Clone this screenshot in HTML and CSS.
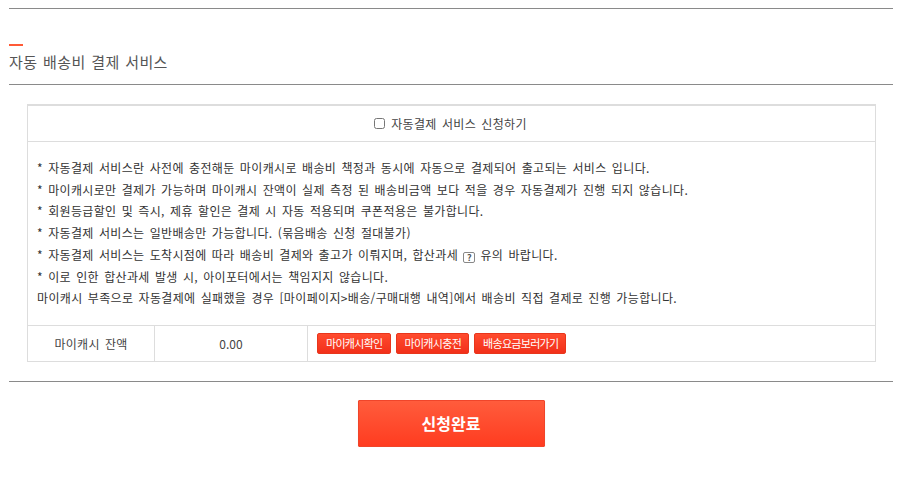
FILE: index.html
```html
<!DOCTYPE html>
<html lang="ko">
<head>
<meta charset="utf-8">
<link rel="stylesheet" href="styles.css">
</head>
<body>
<div class="page">
  <div class="top-line"></div>
  <div class="section-head">
    <span class="accent"></span>
    <h2 class="title">자동 배송비 결제 서비스</h2>
  </div>
  <div class="box">
    <div class="box-head">
      <label class="check"><input type="checkbox"><span>자동결제 서비스 신청하기</span></label>
    </div>
    <div class="notes">
      <p>* 자동결제 서비스란 사전에 충전해둔 마이캐시로 배송비 책정과 동시에 자동으로 결제되어 출고되는 서비스 입니다.</p>
      <p>* 마이캐시로만 결제가 가능하며 마이캐시 잔액이 실제 측정 된 배송비금액 보다 적을 경우 자동결제가 진행 되지 않습니다.</p>
      <p>* 회원등급할인 및 즉시, 제휴 할인은 결제 시 자동 적용되며 쿠폰적용은 불가합니다.</p>
      <p>* 자동결제 서비스는 일반배송만 가능합니다. (묶음배송 신청 절대불가)</p>
      <p>* 자동결제 서비스는 도착시점에 따라 배송비 결제와 출고가 이뤄지며, 합산과세 <span class="qicon">?</span> 유의 바랍니다.</p>
      <p>* 이로 인한 합산과세 발생 시, 아이포터에서는 책임지지 않습니다.</p>
      <p>마이캐시 부족으로 자동결제에 실패했을 경우 [마이페이지&gt;배송/구매대행 내역]에서 배송비 직접 결제로 진행 가능합니다.</p>
    </div>
    <div class="cash-row">
      <div class="cell label">마이캐시 잔액</div>
      <div class="cell value">0.00</div>
      <div class="cell actions">
        <button class="btn-s">마이캐시확인</button>
        <button class="btn-s">마이캐시충전</button>
        <button class="btn-s">배송요금보러가기</button>
      </div>
    </div>
  </div>
  <div class="bottom-line"></div>
  <div class="submit-wrap">
    <button class="btn-submit">신청완료</button>
  </div>
</div>
</body>
</html>
```
FILE: styles.css
```css
* { box-sizing: border-box; }
html, body { margin: 0; padding: 0; background: #fff; }
body {
  font-family: "Noto Sans CJK KR", "Noto Sans", sans-serif;
  color: #333;
}
.page {
  width: 884px;
  margin-left: 9px;
  padding-top: 8px;
}
.top-line {
  border-top: 1px solid #8a8a8a;
}
.section-head {
  padding-top: 35px;
  height: 76px;
  border-bottom: 1px solid #8a8a8a;
}
.accent {
  display: block;
  width: 14px;
  height: 2px;
  background: #ff5a36;
}
.title {
  margin: 6px 0 0;
  font-size: 15px;
  font-weight: 400;
  line-height: 20px;
  color: #555;
  letter-spacing: 0.4px;
  word-spacing: 1px;
}
.box {
  margin: 19px 17px 0 18px;
  border: 1px solid #ddd;
  border-top-width: 2px;
}
.box-head {
  height: 36px;
  border-bottom: 1px solid #ddd;
  display: flex;
  align-items: center;
  justify-content: center;
}
.check {
  display: flex;
  align-items: center;
  font-size: 12px;
  color: #444;
  gap: 6px;
  letter-spacing: 0.35px;
  word-spacing: 1.5px;
  margin-right: 2px;
}
.check input {
  margin: 0;
  width: 11px;
  height: 11px;
}
.notes {
  padding: 15px 9px 16px;
  border-bottom: 1px solid #ddd;
}
.notes p {
  margin: 0;
  font-size: 12px;
  line-height: 21.7px;
  color: #333;
  white-space: nowrap;
  letter-spacing: 0.35px;
  word-spacing: 1.5px;
}
.qicon {
  display: inline-block;
  width: 12px;
  height: 11px;
  border: 1px solid #888;
  border-radius: 2px;
  font-size: 9px;
  line-height: 9px;
  text-align: center;
  font-weight: 700;
  color: #555;
  letter-spacing: 0;
  vertical-align: -1px;
}
.cash-row {
  display: flex;
  height: 35px;
}
.cell {
  display: flex;
  align-items: center;
  font-size: 12px;
  color: #444;
}
.cell.label {
  width: 127px;
  justify-content: center;
  border-right: 1px solid #ddd;
  word-spacing: 1.5px;
  letter-spacing: 0.3px;
}
.cell.value {
  width: 153px;
  justify-content: center;
  border-right: 1px solid #ddd;
}
.cell.actions {
  padding-left: 9px;
  gap: 5px;
}
.btn-s {
  height: 21px;
  padding: 0 7px 0 8px;
  border: 1px solid #e8361c;
  border-radius: 2px;
  background: linear-gradient(#ff4b2e, #f2301a);
  color: #fff;
  font-family: "Noto Sans CJK KR", sans-serif;
  font-size: 11px;
  line-height: 19px;
  letter-spacing: -0.7px;
  cursor: pointer;
}
.bottom-line {
  margin-top: 19px;
  border-top: 1px solid #8a8a8a;
}
.submit-wrap {
  display: flex;
  justify-content: center;
  padding-top: 18px;
}
.btn-submit {
  width: 187px;
  height: 47px;
  border: 1px solid #f0452a;
  border-radius: 1px;
  background: linear-gradient(#ff5c3c, #ff3c20);
  color: #fff;
  font-family: "Noto Sans CJK KR", sans-serif;
  font-size: 16px;
  font-weight: 700;
  box-shadow: 0 1px 1px rgba(0,0,0,0.12);
  cursor: pointer;
}
```
